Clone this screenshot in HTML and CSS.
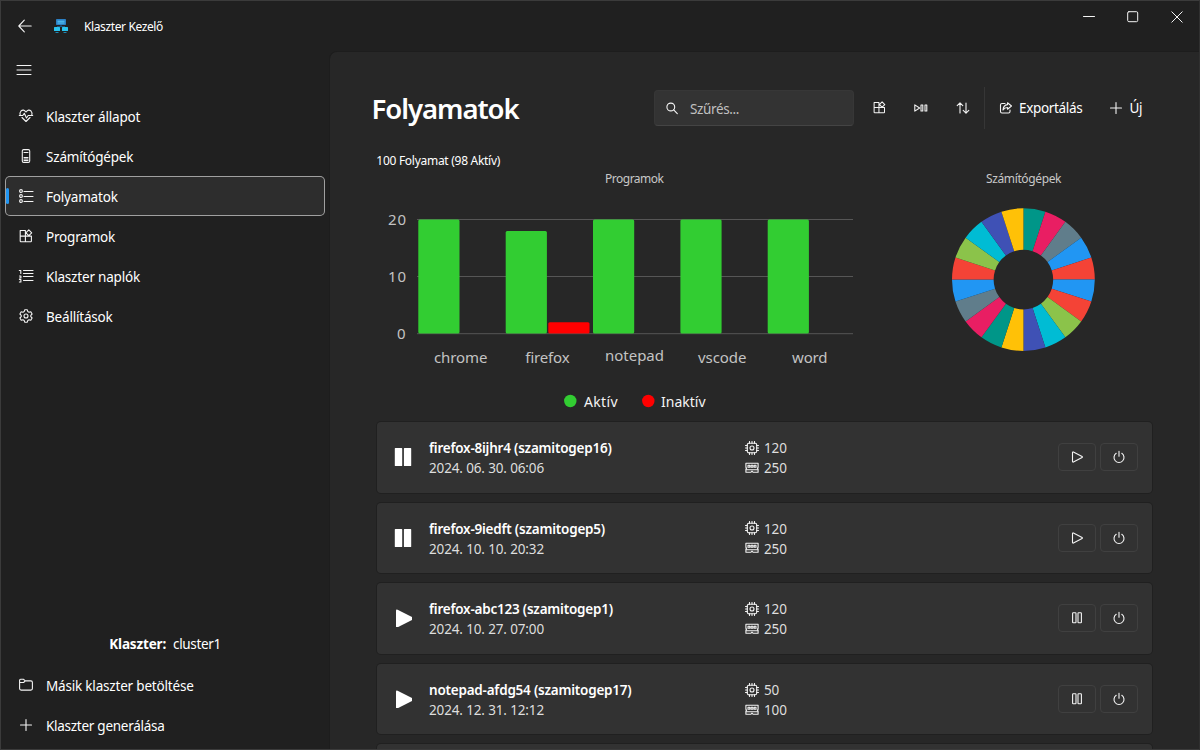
FILE: index.html
```html
<!DOCTYPE html>
<html lang="hu">
<head>
<meta charset="utf-8">
<title>Klaszter Kezelő</title>
<link rel="stylesheet" href="styles.css">
</head>
<body>
<svg class="defs" width="0" height="0">
  <symbol id="apps" viewBox="0 0 14 14"><path d="M1.2 1.5h5.2v11.2H1.9a.7.7 0 0 1-.7-.7zM1.2 7.1h11.2M6.4 12.7h5.3a.7.7 0 0 0 .7-.7V7.1M9.8.9l2.9 2.9-2.9 2.9-2.9-2.9z"/></symbol>
  <symbol id="plus" viewBox="0 0 14 14"><path d="M7 1.500v11M1.500 7h11"/></symbol>
  <symbol id="play" viewBox="0 0 14 14"><path d="M2.500 2.4v9.2a.6.6 0 0 0 .9.5l8.7-4.5a.7.7 0 0 0 0-1.2L3.400 1.9a.6.6 0 0 0-.9.5z"/></symbol>
  <symbol id="pause" viewBox="0 0 14 14"><rect x="2.6" y="1.8" width="3.4" height="10" rx=".6"/><rect x="8" y="1.8" width="3.400" height="10" rx=".6"/></symbol>
  <symbol id="power" viewBox="0 0 14 14"><path d="M4.2 3.3a5 5 0 1 0 5.6 0M7 1.3v5"/></symbol>
  <symbol id="cpu" viewBox="0 0 14 14"><rect x="2.3" y="2.3" width="9.4" height="9.4" rx="1.5"/><circle cx="7" cy="7" r="2"/><path d="M4.5.5v1.8M7 .5v1.8M9.5.5v1.8M4.5 11.7v1.8M7 11.7v1.8M9.5 11.7v1.8M.5 4.5h1.8M.5 7h1.8M.5 9.5h1.8M11.7 4.5h1.8M11.7 7h1.8M11.7 9.5h1.8"/></symbol>
  <symbol id="ram" viewBox="0 0 14 14"><path d="M.9 2.3h12.2v4l-.7.9.7.9v3.2H8.2L7 10.2l-1.2 1.1H.9V8.1l.7-.9-.7-.9zM1.5 8.8h11M3 4.3h1.8v2H3zM6.1 4.3h1.8v2H6.1zM9.2 4.3H11v2H9.2z"/></symbol>
  <symbol id="bigpause" viewBox="0 0 18 18"><path class="solid" d="M1.400 0h6.200q.6 0 .6.6v16.8q0 .6-.6.6H1.400q-.6 0-.6-.6V.6q0-.6.6-.6zM10.500 0h6.100q.6 0 .6.6v16.8q0 .6-.6.6h-6.100q-.6 0-.6-.6V.6q0-.6.6-.6z"/></symbol>
  <symbol id="bigplay" viewBox="0 0 18 18"><path class="solid" d="M2 1.500v16q0 1.400 1.600.8l15-7.700q1.300-1.100 0-2.200L3.600.7Q2 .1 2 1.500z"/></symbol>
</svg>
<div class="window">
  <header class="titlebar">
    <svg class="ico back" viewBox="0 0 14 14"><path d="M.8 7h12.400M6.300 1.200.8 7l5.500 5.800"/></svg>
    <svg class="logo" viewBox="0 0 14 14"><rect x="2" y="0" width="10" height="6" rx=".8" fill="#2b7fc4"/><path fill="#55c8f5" d="M3.500 1.800h7v1h-7zM3.500 3.600h7v1h-7z"/><path fill="#1c5f94" d="M6.500 6h1v2h-1zM3 7h8v.8H3z"/><rect x="0" y="8" width="6" height="4" rx=".5" fill="#29c3ee"/><rect x="8" y="8" width="6" height="4" rx=".5" fill="#29c3ee"/><path fill="#1e88b5" d="M1.500 13h3v1h-3zM9.500 13h3v1h-3z"/></svg>
    <span class="app-name">Klaszter Kezelő</span>
    <div class="controls">
      <svg class="ico c12" viewBox="0 0 12 12"><path d="M.5 5.500h11"/></svg>
      <svg class="ico c12" viewBox="0 0 12 12"><rect x=".7" y=".7" width="10" height="10" rx="1.200"/></svg>
      <svg class="ico c12" viewBox="0 0 12 12"><path d="M.8.8l10.400 10.400M11.200.8.8 11.200"/></svg>
    </div>
  </header>
  <div class="body">
    <aside class="sidebar">
      <svg class="ico burger" viewBox="0 0 14 10"><path d="M0 .5h14M0 5h14M0 9.500h14"/></svg>
      <nav class="nav">
        <a class="item"><svg class="ico" viewBox="0 0 14 14"><path d="M7 3Q4.500-.2 2 2q-1.600 1.800-.8 4M7 3q2.500-3.200 5-1 1.600 1.800.8 4M3 8.500l4 4 4-4M.3 6.500h3.500l1.500-2.200L7.500 9l1.700-2.500h4.500"/></svg><span>Klaszter állapot</span></a>
        <a class="item"><svg class="ico" viewBox="0 0 14 14"><rect x="3.300" y=".6" width="7.400" height="12.800" rx="1.400"/><path d="M5 3.500h4M5 8.500h4M5 10h4M5 11.500h4"/></svg><span>Számítógépek</span></a>
        <a class="item selected"><svg class="ico" viewBox="0 0 14 14"><circle cx="2" cy="2" r="1.400"/><circle cx="2" cy="7" r="1.400"/><circle cx="2" cy="12" r="1.400"/><path d="M5 2.500h9M5 7.500h9M5 12.500h9"/></svg><span>Folyamatok</span></a>
        <a class="item"><svg class="ico"><use href="#apps"/></svg><span>Programok</span></a>
        <a class="item"><svg class="ico" viewBox="0 0 14 14"><path d="M4.500 1.500h9.500M4.500 4.500h9.500M4.500 7.500h9.500M4.500 11.500h9.500M.3 1.500h1.500v3M.5 7h1.400v2H.5M.4 10.500h1.500v2.500H.4"/></svg><span>Klaszter naplók</span></a>
        <a class="item"><svg class="ico" viewBox="0 0 14 14"><path d="M5.700.8h2.600l.5 1.800 1.200.7 1.800-.5 1.300 2.200-1.300 1.300v1.400l1.300 1.300-1.300 2.200-1.800-.5-1.200.7-.5 1.800H5.700l-.5-1.800-1.200-.7-1.800.5L.9 9l1.300-1.300V6.300L.9 5l1.300-2.200 1.800.5 1.200-.7z"/><circle cx="7" cy="7" r="2"/></svg><span>Beállítások</span></a>
      </nav>
      <p class="cluster"><b>Klaszter:</b><span class="cluster-name">cluster1</span></p>
      <nav class="nav">
        <a class="item"><svg class="ico" viewBox="0 0 14 14"><path d="M.6 2.300q0-1 1-1h3l1.700 1.600h5.600q1.500 0 1.500 1.500v6.200q0 1.500-1.500 1.500H2.100q-1.500 0-1.500-1.500zM.6 4.500h4l1.700-1.600"/></svg><span>Másik klaszter betöltése</span></a>
        <a class="item"><svg class="ico"><use href="#plus"/></svg><span class="tight">Klaszter generálása</span></a>
      </nav>
    </aside>
    <main class="content">
      <div class="head">
        <h1 class="heading">Folyamatok</h1>
        <div class="search"><svg class="ico" viewBox="0 0 14 14"><circle cx="5.800" cy="6" r="3.900"/><path d="M8.700 8.900l3.600 3.800"/></svg><span class="placeholder">Szűrés...</span></div>
        <div class="tools">
          <svg class="ico small"><use href="#apps"/></svg>
          <svg class="ico" viewBox="0 0 14 14"><path d="M.8 3.900v6.200L5.600 7zM7 4h1.800v6H7zM11 4h1.800v6H11z"/></svg>
          <svg class="ico" viewBox="0 0 14 14"><path d="M4 12V1.800M1.200 4.600 4 1.800l2.800 2.800M10 2v10.200M7.200 9.400l2.800 2.800 2.800-2.800"/></svg>
        </div>
        <div class="actions">
          <span class="act"><svg class="ico" viewBox="0 0 14 14"><path d="M6 2.500H3Q1.500 2.500 1.500 4v6.500Q1.500 12 3 12h6.500q1.500 0 1.500-1.500V9M8.500 1.800l4 3.200-4 3.200V6.500Q5.500 6.500 4 9q.3-5 4.500-5.400z"/></svg><span>Exportálás</span></span>
          <span class="act"><svg class="ico"><use href="#plus"/></svg><span>Új</span></span>
        </div>
      </div>
      <p class="summary">100 Folyamat (98 Aktív)</p>
      <div class="charts">
        <svg class="chart" width="500" height="251" viewBox="377 171 500 251">
          <text class="cap" x="605" y="183" textLength="59">Programok</text>
          <path class="grid" d="M417 219.500h436M417 276.500h436M417 333.700h436"/>
          <g class="on"><rect x="418.300" y="219.500" width="41.200" height="114" rx="1.500"/><rect x="505.700" y="231" width="41.200" height="102.500" rx="1.500"/><rect x="593" y="219.500" width="41.200" height="114" rx="1.500"/><rect x="680.400" y="219.500" width="41.200" height="114" rx="1.500"/><rect x="767.700" y="219.500" width="41.200" height="114" rx="1.500"/></g>
          <rect class="off" x="548.300" y="322.200" width="41.200" height="11.300" rx="1.500"/>
          <g class="axis">
            <text x="388" y="225" textLength="18">20</text><text x="388" y="282" textLength="18">10</text><text x="397" y="339" textLength="9">0</text>
            <text x="434" y="363" textLength="53.500">chrome</text><text x="525" y="363" textLength="44.500">firefox</text><text x="605" y="361" textLength="59">notepad</text><text x="698" y="363" textLength="48.500">vscode</text><text x="792" y="363" textLength="35.500">word</text>
          </g>
          <circle class="on" cx="570.300" cy="401" r="6.200"/><text class="leg" x="584" y="406.500" textLength="33.500">Aktív</text>
          <circle class="off" cx="648.300" cy="401" r="6.200"/><text class="leg" x="661" y="406.500" textLength="44.500">Inaktív</text>
        </svg>
        <svg class="chart" width="275" height="251" viewBox="877 171 275 251">
          <text class="cap" x="986" y="183" textLength="75.500">Számítógépek</text>
          <g class="donut" id="donut" transform="rotate(-90 1023.400 279.600)"></g>
        </svg>
      </div>
      <div class="list" id="list"></div>
    </main>
  </div>
</div>
<script src="app.js"></script>
</body>
</html>
```

FILE: styles.css
```css
* { box-sizing: border-box; }
body { margin: 0; background: #202020; color: #fff; font-family: "Noto Sans", "Open Sans", sans-serif; overflow: hidden; }
h1, p { margin: 0; }
.defs { position: absolute; }
.window { width: 1200px; height: 750px; border: 1px solid #3b3b3b; border-right-color: #303030; background: #202020; display: flex; flex-direction: column; overflow: hidden; }
.ico { width: 14px; height: 14px; flex: none; fill: none; stroke: #f4f4f4; stroke-width: 1.1; stroke-linecap: round; stroke-linejoin: round; display: block; overflow: visible; }
.small { width: 13px; height: 13px; }
.solid { fill: #fff; stroke: none; }
.titlebar { height: 50px; flex: none; display: flex; align-items: center; padding-left: 16.5px; font-size: 12px; }
.app-name { letter-spacing: -.38px; }
.logo { width: 14px; height: 14px; margin: 0 16.5px 1px 22px; }
.controls { margin-left: auto; align-self: flex-start; display: flex; gap: 32px; padding: 10px 16px 0 0; }
.c12 { width: 12px; height: 12px; stroke-width: 1; }
.body { flex: 1; min-height: 0; display: flex; }
.sidebar { width: 328px; flex: none; display: flex; flex-direction: column; padding: 14px 4px 4px 4px; }
.burger { height: 10px; margin: 0 0 21px 12px; stroke-width: 1; }
.nav { display: flex; flex-direction: column; }
.item { height: 40px; display: flex; align-items: center; gap: 13px; padding-left: 14px; font-size: 13.5px; letter-spacing: -.19px; }
.item span { padding-top: 2px; }
.item .tight { letter-spacing: -.27px; }
.selected { position: relative; background: #2d2d2d; border-radius: 5px; box-shadow: inset 0 0 0 1px #a0a0a0; }
.selected::before { content: ""; position: absolute; left: 1px; top: 12px; width: 3px; height: 16px; border-radius: 2px; background: #2196f3; }
.cluster { margin-top: auto; height: 20px; margin-bottom: 11px; display: flex; justify-content: center; gap: 7px; font-size: 13.5px; line-height: 20px; letter-spacing: -.15px; }
.cluster-name { letter-spacing: -.36px; }
.content { flex: 1; background: #272727; border: 1px solid #1d1d1d; border-right: 0; border-bottom: 0; border-radius: 8px 0 0 0; padding: 34px 46px 0 47px; overflow: hidden; }
.head { height: 43px; display: flex; align-items: center; margin-left: -5.5px; }
.heading { font-size: 27.5px; font-weight: 600; line-height: 43px; width: 282.5px; padding-top: 1px; letter-spacing: -1.03px; }
.search { width: 200px; height: 36px; background: #333; border: 1px solid #373737; border-bottom-color: #444; border-radius: 4px; display: flex; align-items: center; padding-left: 10px; gap: 11px; font-size: 13.5px; color: #c0c0c0; }
.placeholder { letter-spacing: -.36px; padding-top: 2px; }
.tools { display: flex; align-items: center; gap: 28px; padding: 0 14px 0 19px; }
.actions { height: 42px; border-left: 1px solid #363636; padding-left: 14px; display: flex; align-items: center; gap: 27px; font-size: 13.5px; letter-spacing: -.33px; }
.act { display: flex; align-items: center; gap: 6px; }
.summary { font-size: 12px; height: 42px; line-height: 16px; padding-top: 23.5px; margin-left: -.7px; letter-spacing: -.28px; }
.charts { display: flex; height: 251px; }
.chart { flex: none; display: block; }
.cap { font-size: 12px; fill: #c8c8c8; }
.axis { font-size: 15px; fill: #c3c3c3; }
.leg { font-size: 14px; fill: #f4f4f4; }
.grid { stroke: #565656; fill: none; }
.on { fill: #32cd32; }
.off { fill: #f00; }
.donut circle { cx: 1023.4px; cy: 279.6px; r: 50.6px; fill: none; stroke-width: 41.6; stroke-dasharray: 1 19; }
.list { width: 775px; display: flex; flex-direction: column; gap: 10px; }
.card { height: 70.6px; flex: none; background: #323232; border-radius: 4px; box-shadow: 0 0 0 1px #202020; display: flex; align-items: center; padding: 0 14px 0 17px; font-size: 13.5px; line-height: 20px; }
.big { width: 18px; height: 18px; }
.names { margin-left: 17px; width: 316px; padding-top: 2px; }
.name { font-weight: 600; height: 20px; letter-spacing: -.22px; }
.date, .stat { color: #dedede; height: 20px; letter-spacing: -.14px; }
.stats { padding-top: 1px; }
.stat { display: flex; align-items: center; gap: 5px; }
.stat span { padding-top: 1px; }
.btns { margin-left: auto; display: flex; gap: 4px; }
.btn { width: 38px; height: 28px; border: 1px solid #404040; border-radius: 4px; background: #323232; display: flex; align-items: center; justify-content: center; }
```

FILE: app.js
```js
const rows = [
  ['firefox-8ijhr4 (szamitogep16)', '2024. 06. 30. 06:06', 120, 250, false],
  ['firefox-9iedft (szamitogep5)', '2024. 10. 10. 20:32', 120, 250, false],
  ['firefox-abc123 (szamitogep1)', '2024. 10. 27. 07:00', 120, 250, true],
  ['notepad-afdg54 (szamitogep17)', '2024. 12. 31. 12:12', 50, 100, true]
];
const icon = (id, cls = '') => `<svg class="ico ${cls}"><use href="#${id}"/></svg>`;
document.getElementById('list').innerHTML = rows.map(([name, date, cpu, ram, active]) => `
  <div class="card">${icon(active ? 'bigplay' : 'bigpause', 'big')}
    <div class="names"><div class="name">${name}</div><div class="date">${date}</div></div>
    <div class="stats"><div class="stat">${icon('cpu')}<span>${cpu}</span></div><div class="stat">${icon('ram')}<span>${ram}</span></div></div>
    <div class="btns"><span class="btn">${icon(active ? 'pause' : 'play')}</span><span class="btn">${icon('power')}</span></div>
  </div>`).join('') + '<div class="card"></div>';

const [teal, pink, slate, blue, red, lime, cyan, indigo, amber] =
  ['#009688', '#e91e63', '#607d8b', '#2196f3', '#f44336', '#8bc34a', '#00bcd4', '#3f51b5', '#ffc107'];
const slices = [teal, pink, slate, blue, red, blue, red, lime, cyan, indigo,
  amber, teal, pink, slate, blue, red, lime, cyan, indigo, amber];
document.getElementById('donut').innerHTML = slices.map((color, i) =>
  `<circle pathLength="20" stroke="${color}" style="stroke-dashoffset:${-i}"/>`).join('');
```
